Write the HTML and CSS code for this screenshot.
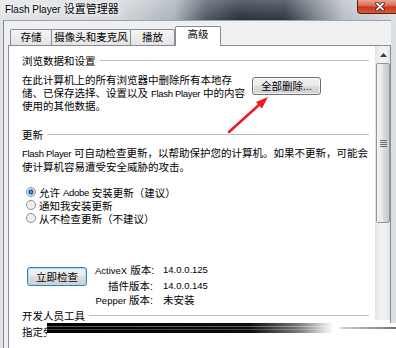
FILE: index.html
```html
<!DOCTYPE html>
<html lang="zh-CN">
<head>
    <meta charset="UTF-8">
    <meta name="viewport" content="width=device-width, initial-scale=1.0">
    <title>Flash Player 设置管理器</title>
    <link rel="stylesheet" href="styles.css">
</head>
<body>
    <div class="window">
        <div class="titlebar">
            <span class="title"><span class="latin">Flash Player</span> 设置管理器</span>
            <div class="close-button">
                <svg width="10" height="9" viewBox="0 0 10 9">
                    <path d="M2 1.5 L8 7.5 M8 1.5 L2 7.5" stroke="#4a1408" stroke-width="3.4" stroke-linecap="round"/>
                    <path d="M2 1.5 L8 7.5 M8 1.5 L2 7.5" stroke="#fff" stroke-width="1.8" stroke-linecap="round"/>
                </svg>
            </div>
        </div>

        <div class="client">
            <div class="tabs">
                <div class="tab tab-storage">存储</div>
                <div class="tab tab-camera">摄像头和麦克风</div>
                <div class="tab tab-playback">播放</div>
                <div class="tab tab-advanced active">高级</div>
            </div>

            <div class="panel">
                <div class="content">
                    <div class="section-title first">浏览数据和设置</div>
                    <div class="browse-row">
                        <p class="text browse-text">在此计算机上的所有浏览器中删除所有本地存<br>储、已保存选择、设置以及 <span class="latin">Flash Player</span> 中的内容<br>使用的其他数据。</p>
                        <button class="btn btn-delete">全部删除...</button>
                    </div>

                    <div class="section-title">更新</div>
                    <p class="text update-text"><span class="latin">Flash Player</span> 可自动检查更新，以帮助保护您的计算机。如果不更新，可能会<br>使计算机容易遭受安全威胁的攻击。</p>

                    <ul class="radios">
                        <li><span class="radio checked"></span>允许 <span class="latin">Adobe</span> 安装更新（建议）</li>
                        <li><span class="radio"></span>通知我安装更新</li>
                        <li><span class="radio"></span>从不检查更新（不建议）</li>
                    </ul>

                    <div class="check-row">
                        <button class="btn btn-check">立即检查</button>
                        <dl class="versions">
                            <dt><span class="latin">ActiveX</span> 版本:</dt><dd class="latin">14.0.0.125</dd>
                            <dt>插件版本:</dt><dd class="latin">14.0.0.145</dd>
                            <dt><span class="latin">Pepper</span> 版本:</dt><dd>未安装</dd>
                        </dl>
                    </div>

                    <div class="section-title dev">开发人员工具</div>
                    <p class="text dev-text">指定受信任的位置以进行开发人员测试。</p>
                </div>

                <div class="scrollbar">
                    <div class="sb-up">
                        <svg width="7" height="4" viewBox="0 0 7 4"><polygon points="0,4 3.5,0 7,4" fill="#3d3d3d"/></svg>
                    </div>
                    <div class="sb-thumb">
                        <svg width="7" height="7" viewBox="0 0 7 7">
                            <path d="M0 0.5 H7 M0 2.5 H7 M0 4.5 H7 M0 6.5 H7" stroke="#6b6b6b" stroke-width="1"/>
                        </svg>
                    </div>
                    <div class="sb-track"></div>
                </div>
            </div>
        </div>

        <svg class="annotation" width="396" height="348" viewBox="0 0 396 348">
            <line x1="229" y1="132" x2="260" y2="104" stroke="#ee1c1c" stroke-width="2.6" stroke-linecap="round"/>
            <polygon points="268,97 262,108.5 256,102" fill="#ee1c1c"/>
        </svg>
        <div class="torn-edge"></div>
    </div>
</body>
</html>
```

FILE: styles.css
```css
* {
    box-sizing: border-box;
}

body {
    margin: 0;
    width: 396px;
    height: 348px;
    overflow: hidden;
    background-color: #fff;
    font-family: "Liberation Sans", "Noto Sans CJK SC", sans-serif;
    font-size: 10.5px;
    color: #000;
}

.latin {
    font-size: 9.5px;
    letter-spacing: -0.3px;
}

.window {
    position: relative;
    width: 396px;
    height: 348px;
    overflow: hidden;
    background: linear-gradient(to right, #e2e5e8 0%, #d2d7db 30%, #a9b1b8 44%, #4d5863 52%, #27323d 60%, #2d3843 72%, #7c858e 80%, #b9c0c6 87%, #dde0e3 100%);
}

/* title bar */
.titlebar {
    display: flex;
    height: 20px;
    background: linear-gradient(rgba(255, 255, 255, 0.25), rgba(255, 255, 255, 0));
}

.title {
    align-self: center;
    padding: 0 0 2px 5px;
    font-size: 11px;
    line-height: 14px;
    white-space: nowrap;
    text-shadow: 0 0 4px #fff, 0 0 7px #fff;
}

.title .latin {
    font-size: 10px;
    letter-spacing: 0;
}

.close-button {
    display: flex;
    align-items: center;
    margin-left: auto;
    margin-right: -5px;
    width: 44px;
    height: 14px;
    padding-left: 17px;
    border: 1px solid #5e1d12;
    border-top: none;
    border-radius: 0 0 4px 4px;
    background: linear-gradient(#e9a595 0%, #d8674e 45%, #c4381e 55%, #d65b3d 100%);
}

/* client area */
.client {
    margin-left: 3px;
    width: 388px;
    height: 328px;
    padding: 5px 0 0 4px;
    border-left: 1px solid #7a8691;
    border-top: 1px solid #9aa4ad;
    background-color: #f0f0f0;
}

.tabs {
    display: flex;
    align-items: flex-end;
    height: 19px;
    padding-left: 2px;
}

.tab {
    height: 16px;
    border: 1px solid #898c95;
    border-bottom: none;
    border-radius: 2px 2px 0 0;
    background: linear-gradient(#f5f5f5, #e3e3e3);
    text-align: center;
    line-height: 15px;
    white-space: nowrap;
}

.tab + .tab {
    margin-left: -1px;
}

.tab-storage {
    width: 42px;
}

.tab-camera {
    width: 80px;
}

.tab-playback {
    width: 45px;
}

.tab.active {
    position: relative;
    z-index: 1;
    width: 46px;
    height: 20px;
    margin-left: 0;
    margin-bottom: -1px;
    background: #fff;
    line-height: 14px;
}

.panel {
    display: flex;
    align-items: flex-start;
    width: 383px;
    height: 303px;
    border: 1px solid #898c95;
    border-bottom: none;
    background-color: #fff;
}

.content {
    flex: 1;
    padding: 9px 6px 0 13px;
}

.section-title {
    display: flex;
    align-items: center;
    margin-top: 16px;
    line-height: 13px;
    white-space: nowrap;
}

.section-title::after {
    content: "";
    flex: 1;
    height: 1px;
    margin: -2px 0 0 4px;
    background-color: #bdbdbd;
}

.section-title.first {
    margin-top: 0;
}

.section-title.dev {
    margin-top: 1px;
}

.text {
    margin: 0;
    line-height: 12.5px;
    white-space: nowrap;
}

.browse-row {
    display: flex;
    margin-top: 6px;
}

.browse-text {
    width: 230px;
}

.update-text {
    margin-top: 5.5px;
}

.dev-text {
    margin-top: 3px;
}

/* buttons */
.btn {
    padding: 0;
    font: inherit;
    color: #000;
    border: 1px solid #707070;
    border-radius: 3px;
    background: linear-gradient(#f2f2f2 0%, #ebebeb 50%, #dddddd 50%, #cfcfcf 100%);
    box-shadow: inset 0 0 0 1px rgba(255, 255, 255, 0.7);
}

.btn-delete {
    width: 69px;
    height: 18px;
    margin-top: 3px;
    line-height: 15px;
}

.btn-check {
    width: 60px;
    height: 19px;
    margin: 4px 0 0 5px;
    line-height: 16px;
    border-color: #3c7fb1;
    box-shadow: inset 0 0 0 1px #a9dcf5;
}

/* radios */
.radios {
    margin: 12.5px 0 0;
    padding: 0 0 0 4px;
    list-style: none;
}

.radios li {
    display: flex;
    align-items: center;
    height: 13px;
    white-space: pre;
}

.radio {
    width: 10px;
    height: 10px;
    margin-right: 3px;
    border: 1px solid #8e8f8f;
    border-radius: 50%;
    background: radial-gradient(circle, #e4e4e4 0, #f4f4f4 55%, #d6d6d6 100%);
}

.radio.checked {
    background: radial-gradient(circle, #5aa6ea 0, #1b5ca8 2.2px, #cfd8e2 3px, #f4f4f4 55%, #d6d6d6 100%);
}

/* versions */
.check-row {
    display: flex;
    margin-top: 38.5px;
}

.versions {
    display: grid;
    grid-template-columns: 58px auto;
    column-gap: 10px;
    margin: 0 0 0 8px;
    line-height: 14.5px;
    white-space: nowrap;
}

.versions .latin {
    letter-spacing: 0;
}

.versions dt {
    text-align: right;
}

.versions dd {
    margin: 0;
}

/* scrollbar */
.scrollbar {
    display: flex;
    flex-direction: column;
    width: 15px;
    height: 274px;
    border-left: 1px solid #e2e2e2;
    background: linear-gradient(to right, #e6e6e6, #f1f1f1 30%, #f1f1f1 70%, #e4e4e4);
}

.sb-up {
    display: flex;
    align-items: center;
    justify-content: center;
    height: 17px;
}

.sb-thumb {
    display: flex;
    align-items: center;
    justify-content: center;
    height: 160px;
    border: 1px solid #979797;
    border-radius: 2px;
    background: linear-gradient(to right, #f4f4f4 0%, #e9e9e9 45%, #dadada 55%, #c9c9c9 100%);
}

.sb-track {
    flex: 1;
}

/* overlays */
.annotation {
    position: absolute;
    left: 0;
    top: 0;
    z-index: 2;
    pointer-events: none;
}

.torn-edge {
    position: absolute;
    left: 47px;
    top: 323px;
    right: 0;
    bottom: 0;
    z-index: 3;
    background:
        linear-gradient(to bottom, transparent 3px, rgba(255, 255, 255, 0.35) 3px, rgba(255, 255, 255, 0.35) 4px, transparent 4px, transparent 6px, rgba(255, 255, 255, 0.25) 6px, rgba(255, 255, 255, 0.25) 7px, transparent 7px) left top / 82% 10px no-repeat,
        linear-gradient(to right, #000 0%, #0c0c0c 58%, #777 72%, #fff 82%, #fff 84%, transparent 84%) left top / 100% 10px no-repeat,
        linear-gradient(to right, #ddd, #6f6f6f) right 0 top 4px / 60px 2px no-repeat,
        #fff;
}
```
